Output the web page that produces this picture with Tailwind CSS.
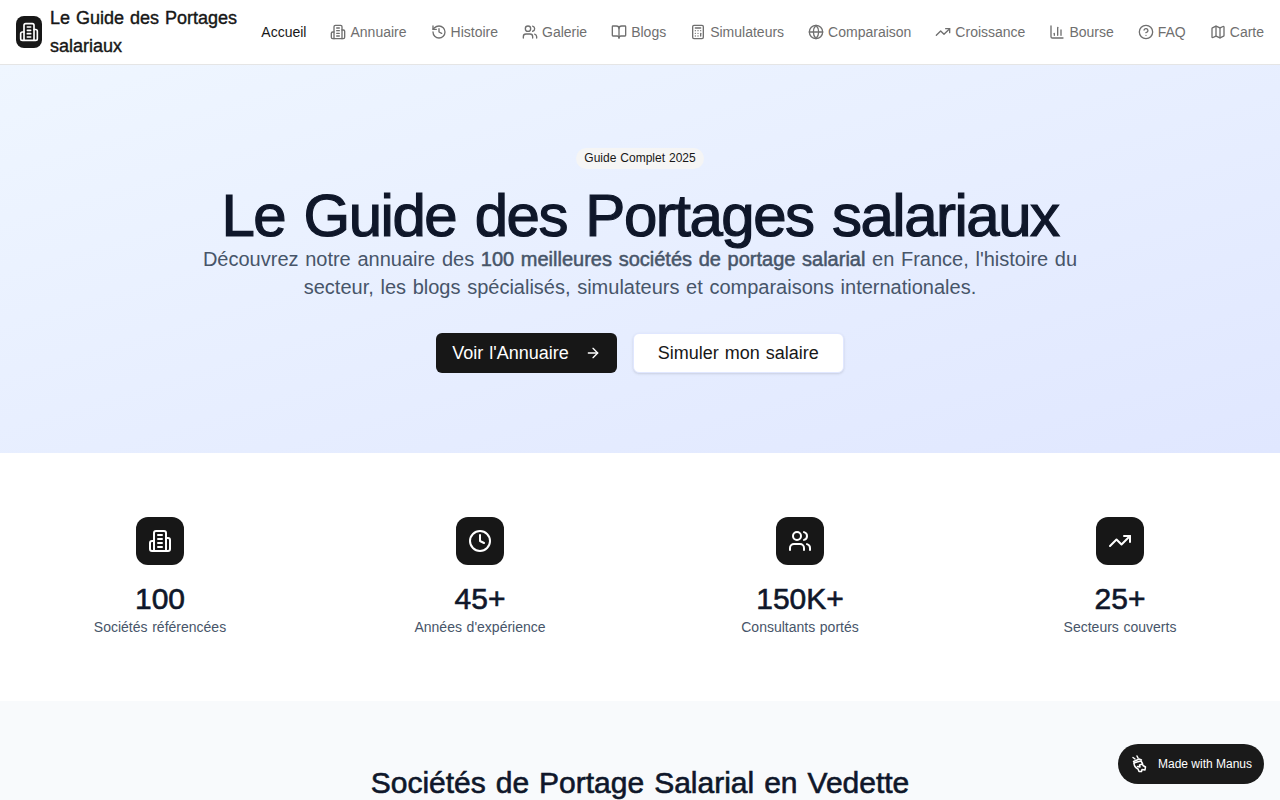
<!DOCTYPE html>
<html lang="fr">
<head>
  <meta charset="UTF-8">
  <meta name="viewport" content="width=device-width, initial-scale=1.0">
  <title>Le Guide des Portages salariaux</title>
  <script src="https://cdn.jsdelivr.net/npm/@tailwindcss/browser@4"></script>
</head>
<body class="bg-white text-[#171717] font-['Liberation_Sans',sans-serif]">

<!-- Header -->
<header class="h-[65px] border-b border-[#e5e5e5] bg-white px-4 flex items-center justify-between">
  <a class="flex items-center gap-2 w-[226px] shrink-0">
    <div class="w-[26px] h-8 shrink-0 rounded-lg bg-[#171717] flex items-center justify-center text-white">
      <svg class="w-5 h-5" viewBox="0 0 24 24" fill="none" stroke="currentColor" stroke-width="2" stroke-linecap="round" stroke-linejoin="round"><path d="M6 22V4a2 2 0 0 1 2-2h8a2 2 0 0 1 2 2v18Z"/><path d="M6 12H4a2 2 0 0 0-2 2v6a2 2 0 0 0 2 2h2"/><path d="M18 9h2a2 2 0 0 1 2 2v9a2 2 0 0 1-2 2h-2"/><path d="M10 6h4"/><path d="M10 10h4"/><path d="M10 14h4"/><path d="M10 18h4"/></svg>
    </div>
    <span class="text-lg leading-7 [word-spacing:1px] [-webkit-text-stroke:0.4px]">Le Guide des Portages salariaux</span>
  </a>
  <nav class="flex items-center gap-6 text-sm text-[#6f6f6f]">
    <a class="text-[#171717]">Accueil</a>
    <a class="flex items-center gap-1">
      <svg class="w-4 h-4" viewBox="0 0 24 24" fill="none" stroke="currentColor" stroke-width="2" stroke-linecap="round" stroke-linejoin="round"><path d="M6 22V4a2 2 0 0 1 2-2h8a2 2 0 0 1 2 2v18Z"/><path d="M6 12H4a2 2 0 0 0-2 2v6a2 2 0 0 0 2 2h2"/><path d="M18 9h2a2 2 0 0 1 2 2v9a2 2 0 0 1-2 2h-2"/><path d="M10 6h4"/><path d="M10 10h4"/><path d="M10 14h4"/><path d="M10 18h4"/></svg>
      Annuaire
    </a>
    <a class="flex items-center gap-1">
      <svg class="w-4 h-4" viewBox="0 0 24 24" fill="none" stroke="currentColor" stroke-width="2" stroke-linecap="round" stroke-linejoin="round"><path d="M3 12a9 9 0 1 0 9-9 9.75 9.75 0 0 0-6.74 2.74L3 8"/><path d="M3 3v5h5"/><path d="M12 7v5l4 2"/></svg>
      Histoire
    </a>
    <a class="flex items-center gap-1">
      <svg class="w-4 h-4" viewBox="0 0 24 24" fill="none" stroke="currentColor" stroke-width="2" stroke-linecap="round" stroke-linejoin="round"><path d="M16 21v-2a4 4 0 0 0-4-4H6a4 4 0 0 0-4 4v2"/><circle cx="9" cy="7" r="4"/><path d="M22 21v-2a4 4 0 0 0-3-3.87"/><path d="M16 3.13a4 4 0 0 1 0 7.75"/></svg>
      Galerie
    </a>
    <a class="flex items-center gap-1">
      <svg class="w-4 h-4" viewBox="0 0 24 24" fill="none" stroke="currentColor" stroke-width="2" stroke-linecap="round" stroke-linejoin="round"><path d="M12 7v14"/><path d="M3 18a1 1 0 0 1-1-1V4a1 1 0 0 1 1-1h5a4 4 0 0 1 4 4 4 4 0 0 1 4-4h5a1 1 0 0 1 1 1v13a1 1 0 0 1-1 1h-6a3 3 0 0 0-3 3 3 3 0 0 0-3-3z"/></svg>
      Blogs
    </a>
    <a class="flex items-center gap-1">
      <svg class="w-4 h-4" viewBox="0 0 24 24" fill="none" stroke="currentColor" stroke-width="2" stroke-linecap="round" stroke-linejoin="round"><rect x="4" y="2" width="16" height="20" rx="2"/><line x1="8" x2="16" y1="6" y2="6"/><line x1="16" x2="16" y1="14" y2="18"/><path d="M16 10h.01"/><path d="M12 10h.01"/><path d="M8 10h.01"/><path d="M12 14h.01"/><path d="M8 14h.01"/><path d="M12 18h.01"/><path d="M8 18h.01"/></svg>
      Simulateurs
    </a>
    <a class="flex items-center gap-1">
      <svg class="w-4 h-4" viewBox="0 0 24 24" fill="none" stroke="currentColor" stroke-width="2" stroke-linecap="round" stroke-linejoin="round"><circle cx="12" cy="12" r="10"/><path d="M12 2a14.5 14.5 0 0 0 0 20 14.5 14.5 0 0 0 0-20"/><path d="M2 12h20"/></svg>
      Comparaison
    </a>
    <a class="flex items-center gap-1">
      <svg class="w-4 h-4" viewBox="0 0 24 24" fill="none" stroke="currentColor" stroke-width="2" stroke-linecap="round" stroke-linejoin="round"><polyline points="22 7 13.5 15.5 8.5 10.5 2 17"/><polyline points="16 7 22 7 22 13"/></svg>
      Croissance
    </a>
    <a class="flex items-center gap-1">
      <svg class="w-4 h-4" viewBox="0 0 24 24" fill="none" stroke="currentColor" stroke-width="2" stroke-linecap="round" stroke-linejoin="round"><path d="M3 3v16a2 2 0 0 0 2 2h16"/><path d="M18 17V9"/><path d="M13 17V5"/><path d="M8 17v-3"/></svg>
      Bourse
    </a>
    <a class="flex items-center gap-1">
      <svg class="w-4 h-4" viewBox="0 0 24 24" fill="none" stroke="currentColor" stroke-width="2" stroke-linecap="round" stroke-linejoin="round"><circle cx="12" cy="12" r="10"/><path d="M9.09 9a3 3 0 0 1 5.83 1c0 2-3 3-3 3"/><path d="M12 17h.01"/></svg>
      FAQ
    </a>
    <a class="flex items-center gap-1">
      <svg class="w-4 h-4" viewBox="0 0 24 24" fill="none" stroke="currentColor" stroke-width="2" stroke-linecap="round" stroke-linejoin="round"><path d="M14.106 5.553a2 2 0 0 0 1.788 0l3.659-1.83A1 1 0 0 1 21 4.619v12.764a1 1 0 0 1-.553.894l-4.553 2.277a2 2 0 0 1-1.788 0l-4.212-2.106a2 2 0 0 0-1.788 0l-3.659 1.83A1 1 0 0 1 3 19.381V6.618a1 1 0 0 1 .553-.894l4.553-2.277a2 2 0 0 1 1.788 0z"/><path d="M15 5.764v15"/><path d="M9 3.236v15"/></svg>
      Carte
    </a>
  </nav>
</header>

<!-- Hero -->
<section class="bg-gradient-to-br from-[#eff6ff] to-[#e0e7ff] py-20 text-center">
  <span class="inline-block rounded-full bg-[#f5f5f5] px-2 py-[3px] text-xs leading-[15px] [word-spacing:0.66px] align-top mt-[3px] mb-4">Guide Complet 2025</span>
  <h1 class="h-[60px] text-6xl leading-[62px] tracking-tight [word-spacing:3.3px] text-[#0f172a] [-webkit-text-stroke:1.2px]">Le Guide des Portages salariaux</h1>
  <p class="mx-auto max-w-[896px] text-xl leading-7 [word-spacing:1.1px] text-[#475569]">Découvrez notre annuaire des <strong class="font-normal [-webkit-text-stroke:0.5px]">100 meilleures sociétés de portage salarial</strong> en France, l'histoire du secteur, les blogs spécialisés, simulateurs et comparaisons internationales.</p>
  <div class="mt-8 flex items-center justify-center gap-4">
    <a class="h-10 px-4 rounded-md bg-[#171717] text-white text-lg [word-spacing:1px] flex items-center gap-4">Voir l'Annuaire
      <svg class="w-4 h-4" viewBox="0 0 24 24" fill="none" stroke="currentColor" stroke-width="2" stroke-linecap="round" stroke-linejoin="round"><path d="M5 12h14"/><path d="m12 5 7 7-7 7"/></svg>
    </a>
    <a class="h-10 px-6 rounded-md bg-white border border-[#e0e7ff] shadow-sm text-lg [word-spacing:1px] flex items-center">Simuler mon salaire</a>
  </div>
</section>

<!-- Stats -->
<section class="py-16 bg-white grid grid-cols-4 text-center">
  <div class="flex flex-col items-center">
    <div class="w-12 h-12 mb-4 rounded-xl bg-[#171717] text-white flex items-center justify-center">
      <svg class="w-6 h-6" viewBox="0 0 24 24" fill="none" stroke="currentColor" stroke-width="2" stroke-linecap="round" stroke-linejoin="round"><path d="M6 22V4a2 2 0 0 1 2-2h8a2 2 0 0 1 2 2v18Z"/><path d="M6 12H4a2 2 0 0 0-2 2v6a2 2 0 0 0 2 2h2"/><path d="M18 9h2a2 2 0 0 1 2 2v9a2 2 0 0 1-2 2h-2"/><path d="M10 6h4"/><path d="M10 10h4"/><path d="M10 14h4"/><path d="M10 18h4"/></svg>
    </div>
    <div class="text-3xl leading-9 text-[#0f172a] [-webkit-text-stroke:0.6px]">100</div>
    <div class="text-sm leading-5 [word-spacing:0.77px] text-[#475569]">Sociétés référencées</div>
  </div>
  <div class="flex flex-col items-center">
    <div class="w-12 h-12 mb-4 rounded-xl bg-[#171717] text-white flex items-center justify-center">
      <svg class="w-6 h-6" viewBox="0 0 24 24" fill="none" stroke="currentColor" stroke-width="2" stroke-linecap="round" stroke-linejoin="round"><circle cx="12" cy="12" r="10"/><polyline points="12 6 12 12 16 14"/></svg>
    </div>
    <div class="text-3xl leading-9 text-[#0f172a] [-webkit-text-stroke:0.6px]">45+</div>
    <div class="text-sm leading-5 [word-spacing:0.77px] text-[#475569]">Années d'expérience</div>
  </div>
  <div class="flex flex-col items-center">
    <div class="w-12 h-12 mb-4 rounded-xl bg-[#171717] text-white flex items-center justify-center">
      <svg class="w-6 h-6" viewBox="0 0 24 24" fill="none" stroke="currentColor" stroke-width="2" stroke-linecap="round" stroke-linejoin="round"><path d="M16 21v-2a4 4 0 0 0-4-4H6a4 4 0 0 0-4 4v2"/><circle cx="9" cy="7" r="4"/><path d="M22 21v-2a4 4 0 0 0-3-3.87"/><path d="M16 3.13a4 4 0 0 1 0 7.75"/></svg>
    </div>
    <div class="text-3xl leading-9 text-[#0f172a] [-webkit-text-stroke:0.6px]">150K+</div>
    <div class="text-sm leading-5 [word-spacing:0.77px] text-[#475569]">Consultants portés</div>
  </div>
  <div class="flex flex-col items-center">
    <div class="w-12 h-12 mb-4 rounded-xl bg-[#171717] text-white flex items-center justify-center">
      <svg class="w-6 h-6" viewBox="0 0 24 24" fill="none" stroke="currentColor" stroke-width="2" stroke-linecap="round" stroke-linejoin="round"><polyline points="22 7 13.5 15.5 8.5 10.5 2 17"/><polyline points="16 7 22 7 22 13"/></svg>
    </div>
    <div class="text-3xl leading-9 text-[#0f172a] [-webkit-text-stroke:0.6px]">25+</div>
    <div class="text-sm leading-5 [word-spacing:0.77px] text-[#475569]">Secteurs couverts</div>
  </div>
</section>

<!-- Featured -->
<section class="py-16 bg-[#f8fafc] text-center h-[300px]">
  <h2 class="text-3xl leading-9 [word-spacing:1.65px] text-[#0f172a] [-webkit-text-stroke:0.6px]">Sociétés de Portage Salarial en Vedette</h2>
</section>

<!-- Manus badge -->
<div class="fixed right-4 bottom-4 h-10 w-[146px] rounded-full bg-[#1a1a1a] text-white flex items-center pl-3 gap-2">
  <svg class="w-5 h-5" viewBox="0 0 20 20" fill="none" stroke="currentColor" stroke-width="1.5" stroke-linecap="round" stroke-linejoin="round"><path d="M5 5 3 3.500"/><path d="M8 4 7 2"/><path d="M3.500 7.500 6 6.500l3-1.500 2.500 1"/><path d="M4 9l3-1 4-1 1.500 2.500"/><path d="M4 9c0 3 2 5 4 6l1 2.500h2.500l.5-2 3 .5 .5-3-2.500-1.500-.5-1.500-3 1 .5 2-2.500-.5"/></svg>
  <span class="text-xs">Made with Manus</span>
</div>

</body>
</html>
